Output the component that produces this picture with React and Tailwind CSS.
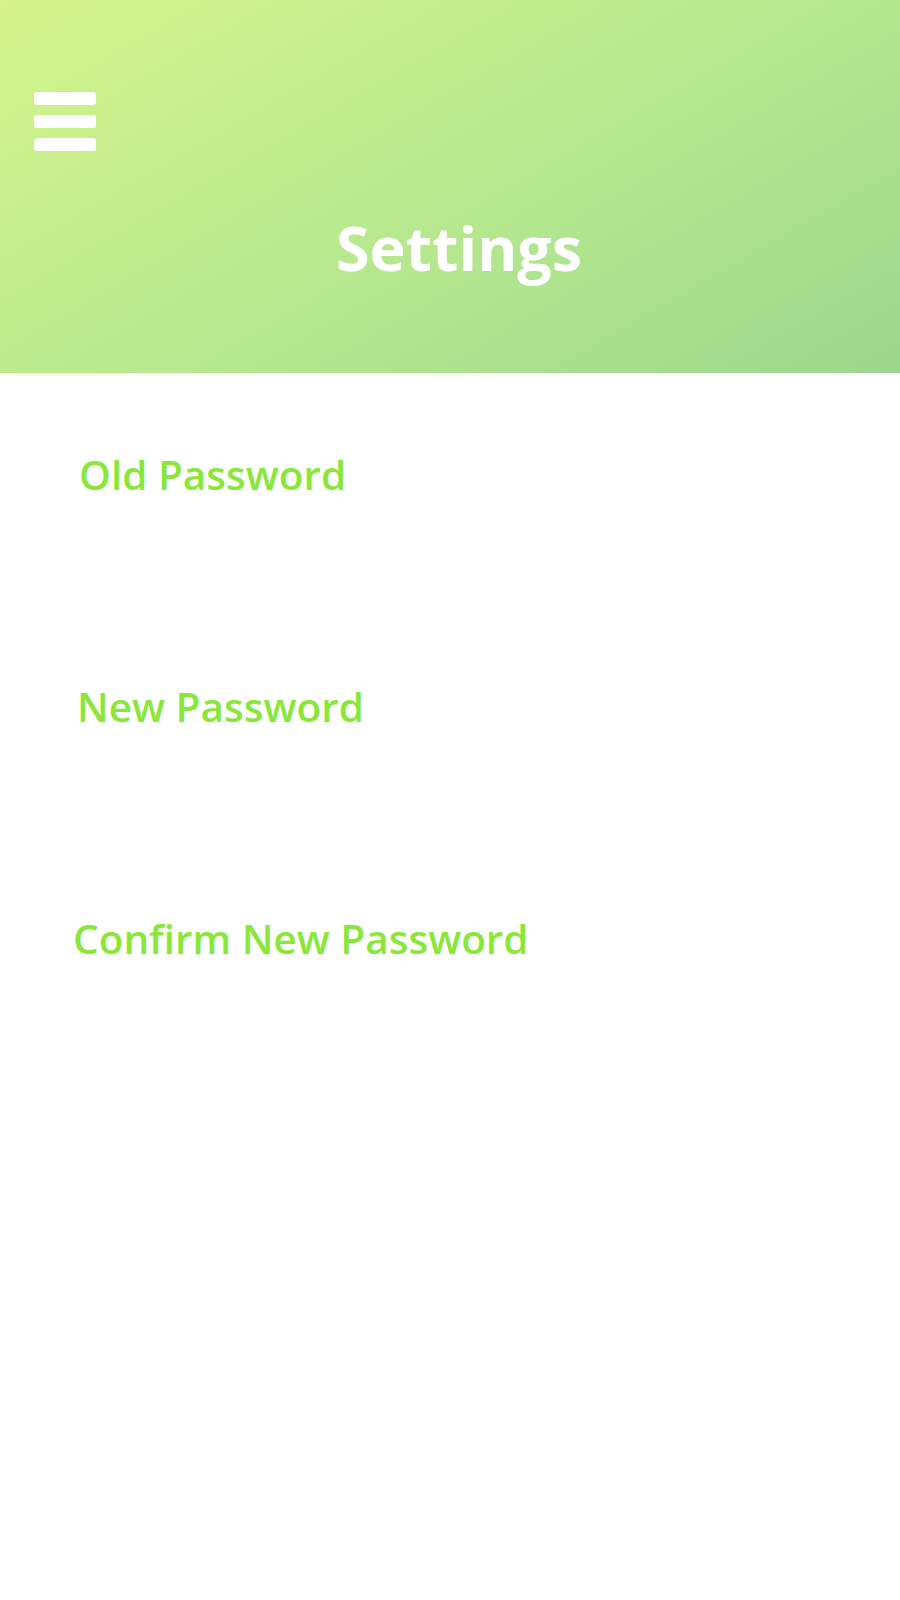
import React from 'react';

const fields = [
  { label: 'Old Password', className: 'ml-[79px]' },
  { label: 'New Password', className: 'ml-[77px]' },
  { label: 'Confirm New Password', className: 'ml-[73px]' },
];

function Hamburger() {
  return (
    <button className="flex w-[62px] flex-col gap-[10px]" aria-label="Menu">
      <span className="h-[13px] w-full rounded-[3px] bg-white" />
      <span className="h-[13px] w-full rounded-[3px] bg-white" />
      <span className="h-[13px] w-full rounded-[3px] bg-white" />
    </button>
  );
}

export default function App() {
  return (
    <div className="min-h-[1600px] w-[900px] bg-white font-['Open_Sans',sans-serif]">
      <header className="h-[373px] bg-[linear-gradient(150deg,#d4f48a_0%,#b9e98f_50%,#9bd78c_100%)] px-[34px] pt-[92px]">
        <Hamburger />
        <h1 className="mt-[66px] pl-[18px] text-center text-[61px] font-bold leading-none text-white">
          Settings
        </h1>
      </header>

      <main className="pt-[74px]">
        {fields.map((f) => (
          <div key={f.label} className="h-[232px]">
            <label className={`block text-[40.5px] font-semibold leading-[56px] text-[#89e73a] ${f.className}`}>
              {f.label}
            </label>
            <input type="password" className="mt-4 ml-[79px] w-[740px] bg-transparent outline-none" />
          </div>
        ))}
      </main>
    </div>
  );
}
